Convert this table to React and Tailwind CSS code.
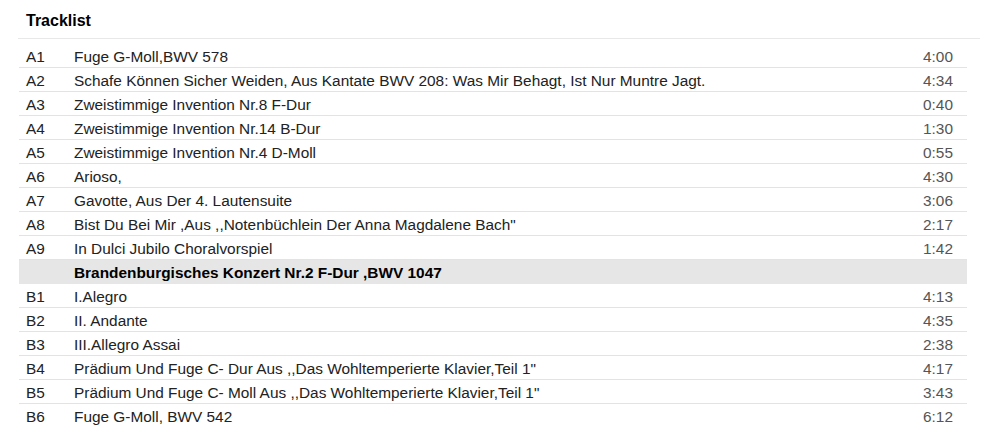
const tracks = [
  { pos: 'A1', title: 'Fuge G-Moll,BWV 578', dur: '4:00' },
  { pos: 'A2', title: 'Schafe Können Sicher Weiden, Aus Kantate BWV 208: Was Mir Behagt, Ist Nur Muntre Jagt.', dur: '4:34' },
  { pos: 'A3', title: 'Zweistimmige Invention Nr.8 F-Dur', dur: '0:40' },
  { pos: 'A4', title: 'Zweistimmige Invention Nr.14 B-Dur', dur: '1:30' },
  { pos: 'A5', title: 'Zweistimmige Invention Nr.4 D-Moll', dur: '0:55' },
  { pos: 'A6', title: 'Arioso,', dur: '4:30' },
  { pos: 'A7', title: 'Gavotte, Aus Der 4. Lautensuite', dur: '3:06' },
  { pos: 'A8', title: 'Bist Du Bei Mir ,Aus ,,Notenbüchlein Der Anna Magdalene Bach"', dur: '2:17' },
  { pos: 'A9', title: 'In Dulci Jubilo Choralvorspiel', dur: '1:42' },
  { heading: true, title: 'Brandenburgisches Konzert Nr.2 F-Dur ,BWV 1047' },
  { pos: 'B1', title: 'I.Alegro', dur: '4:13' },
  { pos: 'B2', title: 'II. Andante', dur: '4:35' },
  { pos: 'B3', title: 'III.Allegro Assai', dur: '2:38' },
  { pos: 'B4', title: 'Prädium Und Fuge C- Dur Aus ,,Das Wohltemperierte Klavier,Teil 1"', dur: '4:17' },
  { pos: 'B5', title: 'Prädium Und Fuge C- Moll Aus ,,Das Wohltemperierte Klavier,Teil 1"', dur: '3:43' },
  { pos: 'B6', title: 'Fuge G-Moll, BWV 542', dur: '6:12' },
];

export default function App() {
  return (
    <div className="w-[983px] h-[441px] bg-white font-['Liberation_Sans',Arial,sans-serif] text-[15.4px] text-[#222]">
      <div className="ml-[18px] mr-[3px] h-[39px] pt-[4px] pl-[8px] flex items-center border-b border-[#e8e8e8]">
        <h2 className="text-[16px] font-bold text-black">Tracklist</h2>
      </div>
      <div className="mt-[5px] ml-[19px] w-[948px]">
        {tracks.map((t, i) =>
          t.heading ? (
            <div key={i} className="h-[24px] pt-[2px] flex items-center bg-[#e6e6e6] border-b border-[#e6e6e6]">
              <span className="w-[55px] shrink-0" />
              <span className="font-bold text-black">{t.title}</span>
            </div>
          ) : (
            <div
              key={i}
              className={`h-[24px] pt-[2px] flex items-center pl-[7px] pr-[14px] ${i === tracks.length - 1 ? '' : 'border-b border-[#e3e3e3]'}`}
            >
              <span className="w-[48px] shrink-0">{t.pos}</span>
              <span className="flex-1 truncate">{t.title}</span>
              <span className="text-[#555]">{t.dur}</span>
            </div>
          )
        )}
      </div>
    </div>
  );
}
